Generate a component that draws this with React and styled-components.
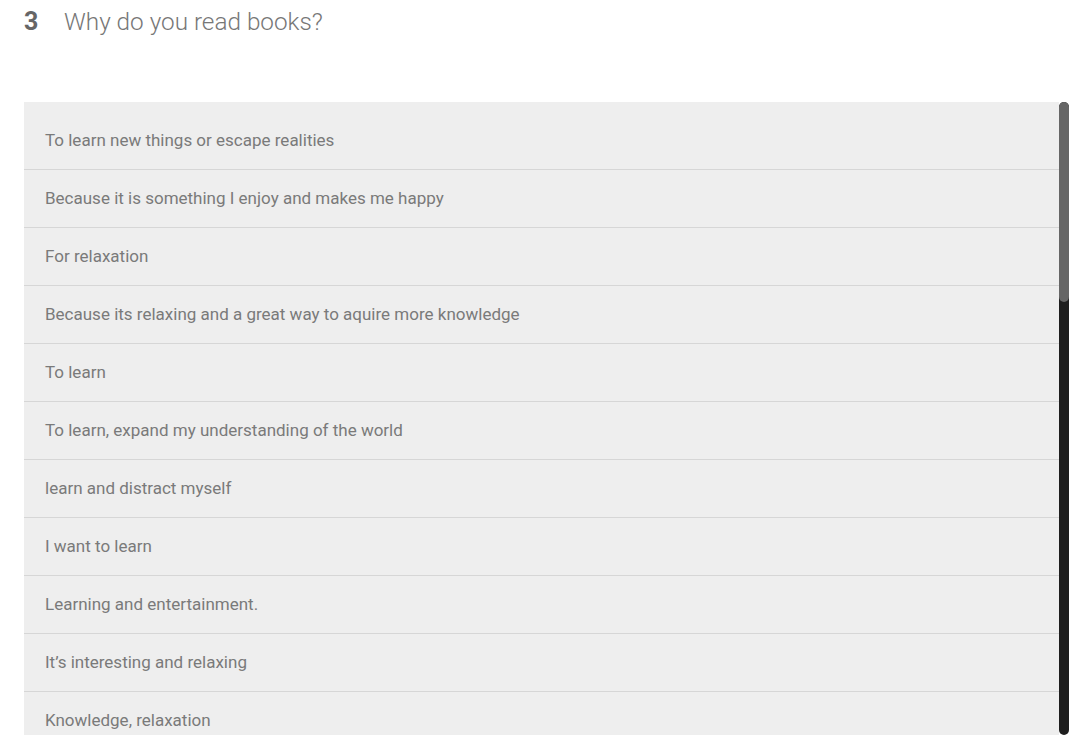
import React from 'react';
import styled, { createGlobalStyle } from 'styled-components';

const Global = createGlobalStyle`
  html, body {
    margin: 0;
    padding: 0;
    background: #fff;
    font-family: Roboto, 'Liberation Sans', sans-serif;
  }
`;

const Page = styled.div`
  padding: 0 19px 0 24px;
`;

const Question = styled.div`
  display: flex;
  align-items: baseline;
  height: 42px;
  padding-top: 7px;
  box-sizing: border-box;
`;

const Num = styled.span`
  font-size: 25px;
  font-weight: 700;
  color: #666;
  width: 40px;
`;

const Title = styled.span`
  font-size: 24.3px;
  font-weight: 300;
  color: #777;
`;

const Box = styled.div`
  margin-top: 60px;
  height: 633px;
  display: flex;
`;

const List = styled.div`
  flex: 1;
  overflow: hidden;
  padding-top: 9px;
  box-sizing: border-box;
  background: #eee;
`;

const Row = styled.div`
  height: 58px;
  display: flex;
  align-items: center;
  padding: 0 0 2px 21px;
  font-size: 17px;
  color: #7a7a7a;
  border-bottom: 1px solid #d6d6d6;
  box-sizing: border-box;
  &:first-child { height: 59px; padding-bottom: 1px; }
  &:last-child { border-bottom: none; }
`;

const Track = styled.div`
  width: 10px;
  background: #1e1e1e;
  border-radius: 5px;
  display: flex;
  flex-direction: column;
`;

const Thumb = styled.div`
  height: 200px;
  background: #666;
  border-radius: 5px;
`;

const answers = [
  'To learn new things or escape realities',
  'Because it is something I enjoy and makes me happy',
  'For relaxation',
  'Because its relaxing and a great way to aquire more knowledge',
  'To learn',
  'To learn, expand my understanding of the world',
  'learn and distract myself',
  'I want to learn',
  'Learning and entertainment.',
  'It\u2019s interesting and relaxing',
  'Knowledge, relaxation',
];

export default function App() {
  return (
    <Page>
      <Global />
      <Question>
        <Num>3</Num>
        <Title>Why do you read books?</Title>
      </Question>
      <Box>
        <List>
          {answers.map((a, i) => (
            <Row key={i}>{a}</Row>
          ))}
        </List>
        <Track>
          <Thumb />
        </Track>
      </Box>
    </Page>
  );
}
